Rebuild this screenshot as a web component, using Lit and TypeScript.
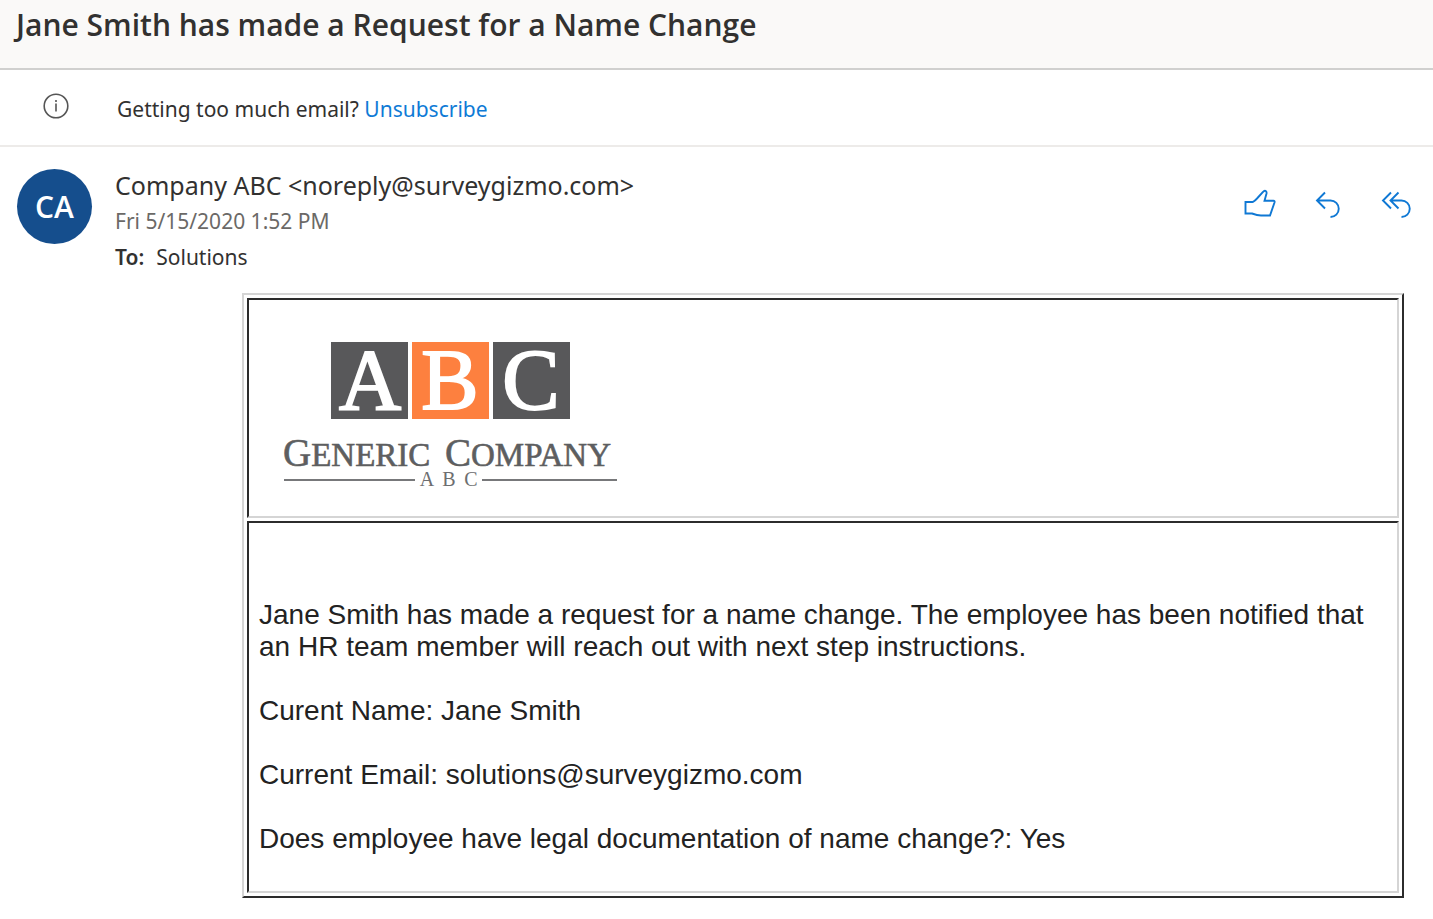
import { LitElement, html, css } from "lit";
import { customElement } from "lit/decorators.js";

@customElement("company-logo")
class CompanyLogo extends LitElement {
  static styles = css`
    :host { display: block; width: 336px; }
    svg { display: block; width: 100%; height: auto; overflow: visible; }
    .tile { font: 86px "Liberation Serif", serif; fill: #fff; stroke: #fff; stroke-width: 2; text-anchor: middle; }
    .name { font: 33px "Liberation Serif", serif; fill: #5d5e60; stroke: #5d5e60; stroke-width: 0.6; }
    .initial { font-size: 39px; }
    .sub { font: 20px "Liberation Serif", serif; fill: #6d6e70; text-anchor: middle; }
  `;

  render() {
    return html`
      <svg viewBox="0 -14 336 164" role="img" aria-label="Generic Company ABC">
        <rect x="49" y="2" width="77" height="77" fill="#58585a" />
        <rect x="130" y="2" width="77" height="77" fill="#fd803f" />
        <rect x="211" y="2" width="77" height="77" fill="#58585a" />
        <text class="tile" x="88" y="69">A</text>
        <text class="tile" x="168" y="69">B</text>
        <text class="tile" x="249" y="69">C</text>
        <text class="name" x="1" y="126"><tspan class="initial">G</tspan>ENERIC</text>
        <text class="name" x="163" y="126"><tspan class="initial">C</tspan>OMPANY</text>
        <path d="M2 140H133M200 140H335" stroke="#77787a" stroke-width="2" />
        <text class="sub" x="145" y="146">A</text>
        <text class="sub" x="167" y="146">B</text>
        <text class="sub" x="189" y="146">C</text>
      </svg>
    `;
  }
}

@customElement("app-root")
class AppRoot extends LitElement {
  static styles = css`
    :host {
      display: block;
      background: #fff;
      color: #323130;
      font-family: "Segoe UI", "Noto Sans", "Open Sans", sans-serif;
    }
    .subject {
      padding: 4px 16px 22px;
      background: #faf9f8;
      border-bottom: 2px solid #d0d0cf;
    }
    h1 { margin: 0; font: 600 30px/42px "Segoe UI", "Open Sans", sans-serif; }
    .notice {
      display: flex;
      align-items: flex-start;
      padding: 23px 16px 20px 43px;
      border-bottom: 2px solid #edebe9;
      font-size: 21px;
      line-height: 32px;
      gap: 48px;
    }
    .notice svg { width: 26px; height: 26px; flex: none; }
    .notice p { margin: 0; }
    a { color: #0f7bd6; text-decoration: none; }
    .header { display: flex; padding: 20px 21px 18px 17px; gap: 23px; }
    .avatar {
      display: flex;
      align-items: center;
      justify-content: center;
      flex: none;
      width: 75px;
      height: 75px;
      margin-top: 2px;
      border-radius: 50%;
      background: #154e8d;
      color: #fff;
      font: 600 30px/36px "Segoe UI", "Open Sans", sans-serif;
    }
    .meta { flex: 1; min-width: 0; font-size: 21px; line-height: 36px; }
    .meta p { margin: 0; }
    .meta .from { font-size: 25px; }
    .date { color: #6b6967; }
    .to b { font-weight: 600; margin-right: 12px; }
    .actions { display: flex; gap: 36px; height: 32px; margin-top: 21px; }
    button { padding: 0; border: 0; background: none; width: 32px; height: 32px; cursor: pointer; }
    button svg { display: block; width: 32px; height: 32px; }
    .letter {
      display: flex;
      flex-direction: column;
      gap: 3px;
      margin: 0 29px 20px 242px;
      padding: 3px;
      border: 2px solid;
      border-color: #d5d5d5 #2c2c2c #2c2c2c #d5d5d5;
      font: 28px/32px Arial, "Liberation Sans", sans-serif;
      color: #222;
    }
    .cell { border: 2px solid; border-color: #2c2c2c #d5d5d5 #d5d5d5 #2c2c2c; }
    .brand { padding: 26px 33px; }
    .body { padding: 76px 10px 36px; }
    .body p { margin: 0 0 32px; }
    .body p:last-child { margin: 0; }
  `;

  render() {
    return html`
      <header class="subject"><h1>Jane Smith has made a Request for a Name Change</h1></header>
      <section class="notice">
        <svg viewBox="0 0 26 26" fill="none" stroke="#555" stroke-width="1.6">
          <circle cx="13" cy="13" r="11.8" />
          <path d="M13 10.5V18.5M13 7V9" />
        </svg>
        <p>Getting too much email? <a href="#unsubscribe">Unsubscribe</a></p>
      </section>
      <section class="header">
        <div class="avatar">CA</div>
        <div class="meta">
          <p class="from">Company ABC &lt;noreply@surveygizmo.com&gt;</p>
          <p class="date">Fri 5/15/2020 1:52 PM</p>
          <p class="to"><b>To:</b>Solutions</p>
        </div>
        <div class="actions">
          <button aria-label="Like">
            <svg viewBox="0 0 32 32" fill="none" stroke="#0f78d4" stroke-width="1.9">
              <path d="M1.5 14V25.5H8C12 27 14 27.5 17 27.5H26L30.5 14.5Q31 12.8 29.5 12.8H20.5L22.5 5.5C23 2.6 20.5 2 19 4L13 10.5C11 12.5 9.5 14 8.5 14Z" />
            </svg>
          </button>
          <button aria-label="Reply">
            <svg viewBox="0 0 32 32" fill="none" stroke="#0f78d4" stroke-width="1.9">
              <path d="M13 4.5L5 12.5L13 20.5M5 12.5H18.5A8.200 8.200 0 0 1 18.5 29" />
            </svg>
          </button>
          <button aria-label="Reply all">
            <svg viewBox="0 0 32 32" fill="none" stroke="#0f78d4" stroke-width="1.9">
              <path d="M11 4.5L3 12.5L11 20.5M18.5 4.5L10.5 12.5L18.5 20.5M10.5 12.5H21.5A8.200 8.200 0 0 1 21.5 29" />
            </svg>
          </button>
        </div>
      </section>
      <article class="letter">
        <div class="cell brand"><company-logo></company-logo></div>
        <div class="cell body">
          <p>Jane Smith has made a request for a name change. The employee has been notified that an HR team member will reach out with next step instructions.</p>
          <p>Curent Name: Jane Smith</p>
          <p>Current Email: solutions@surveygizmo.com</p>
          <p>Does employee have legal documentation of name change?: Yes</p>
        </div>
      </article>
    `;
  }
}
